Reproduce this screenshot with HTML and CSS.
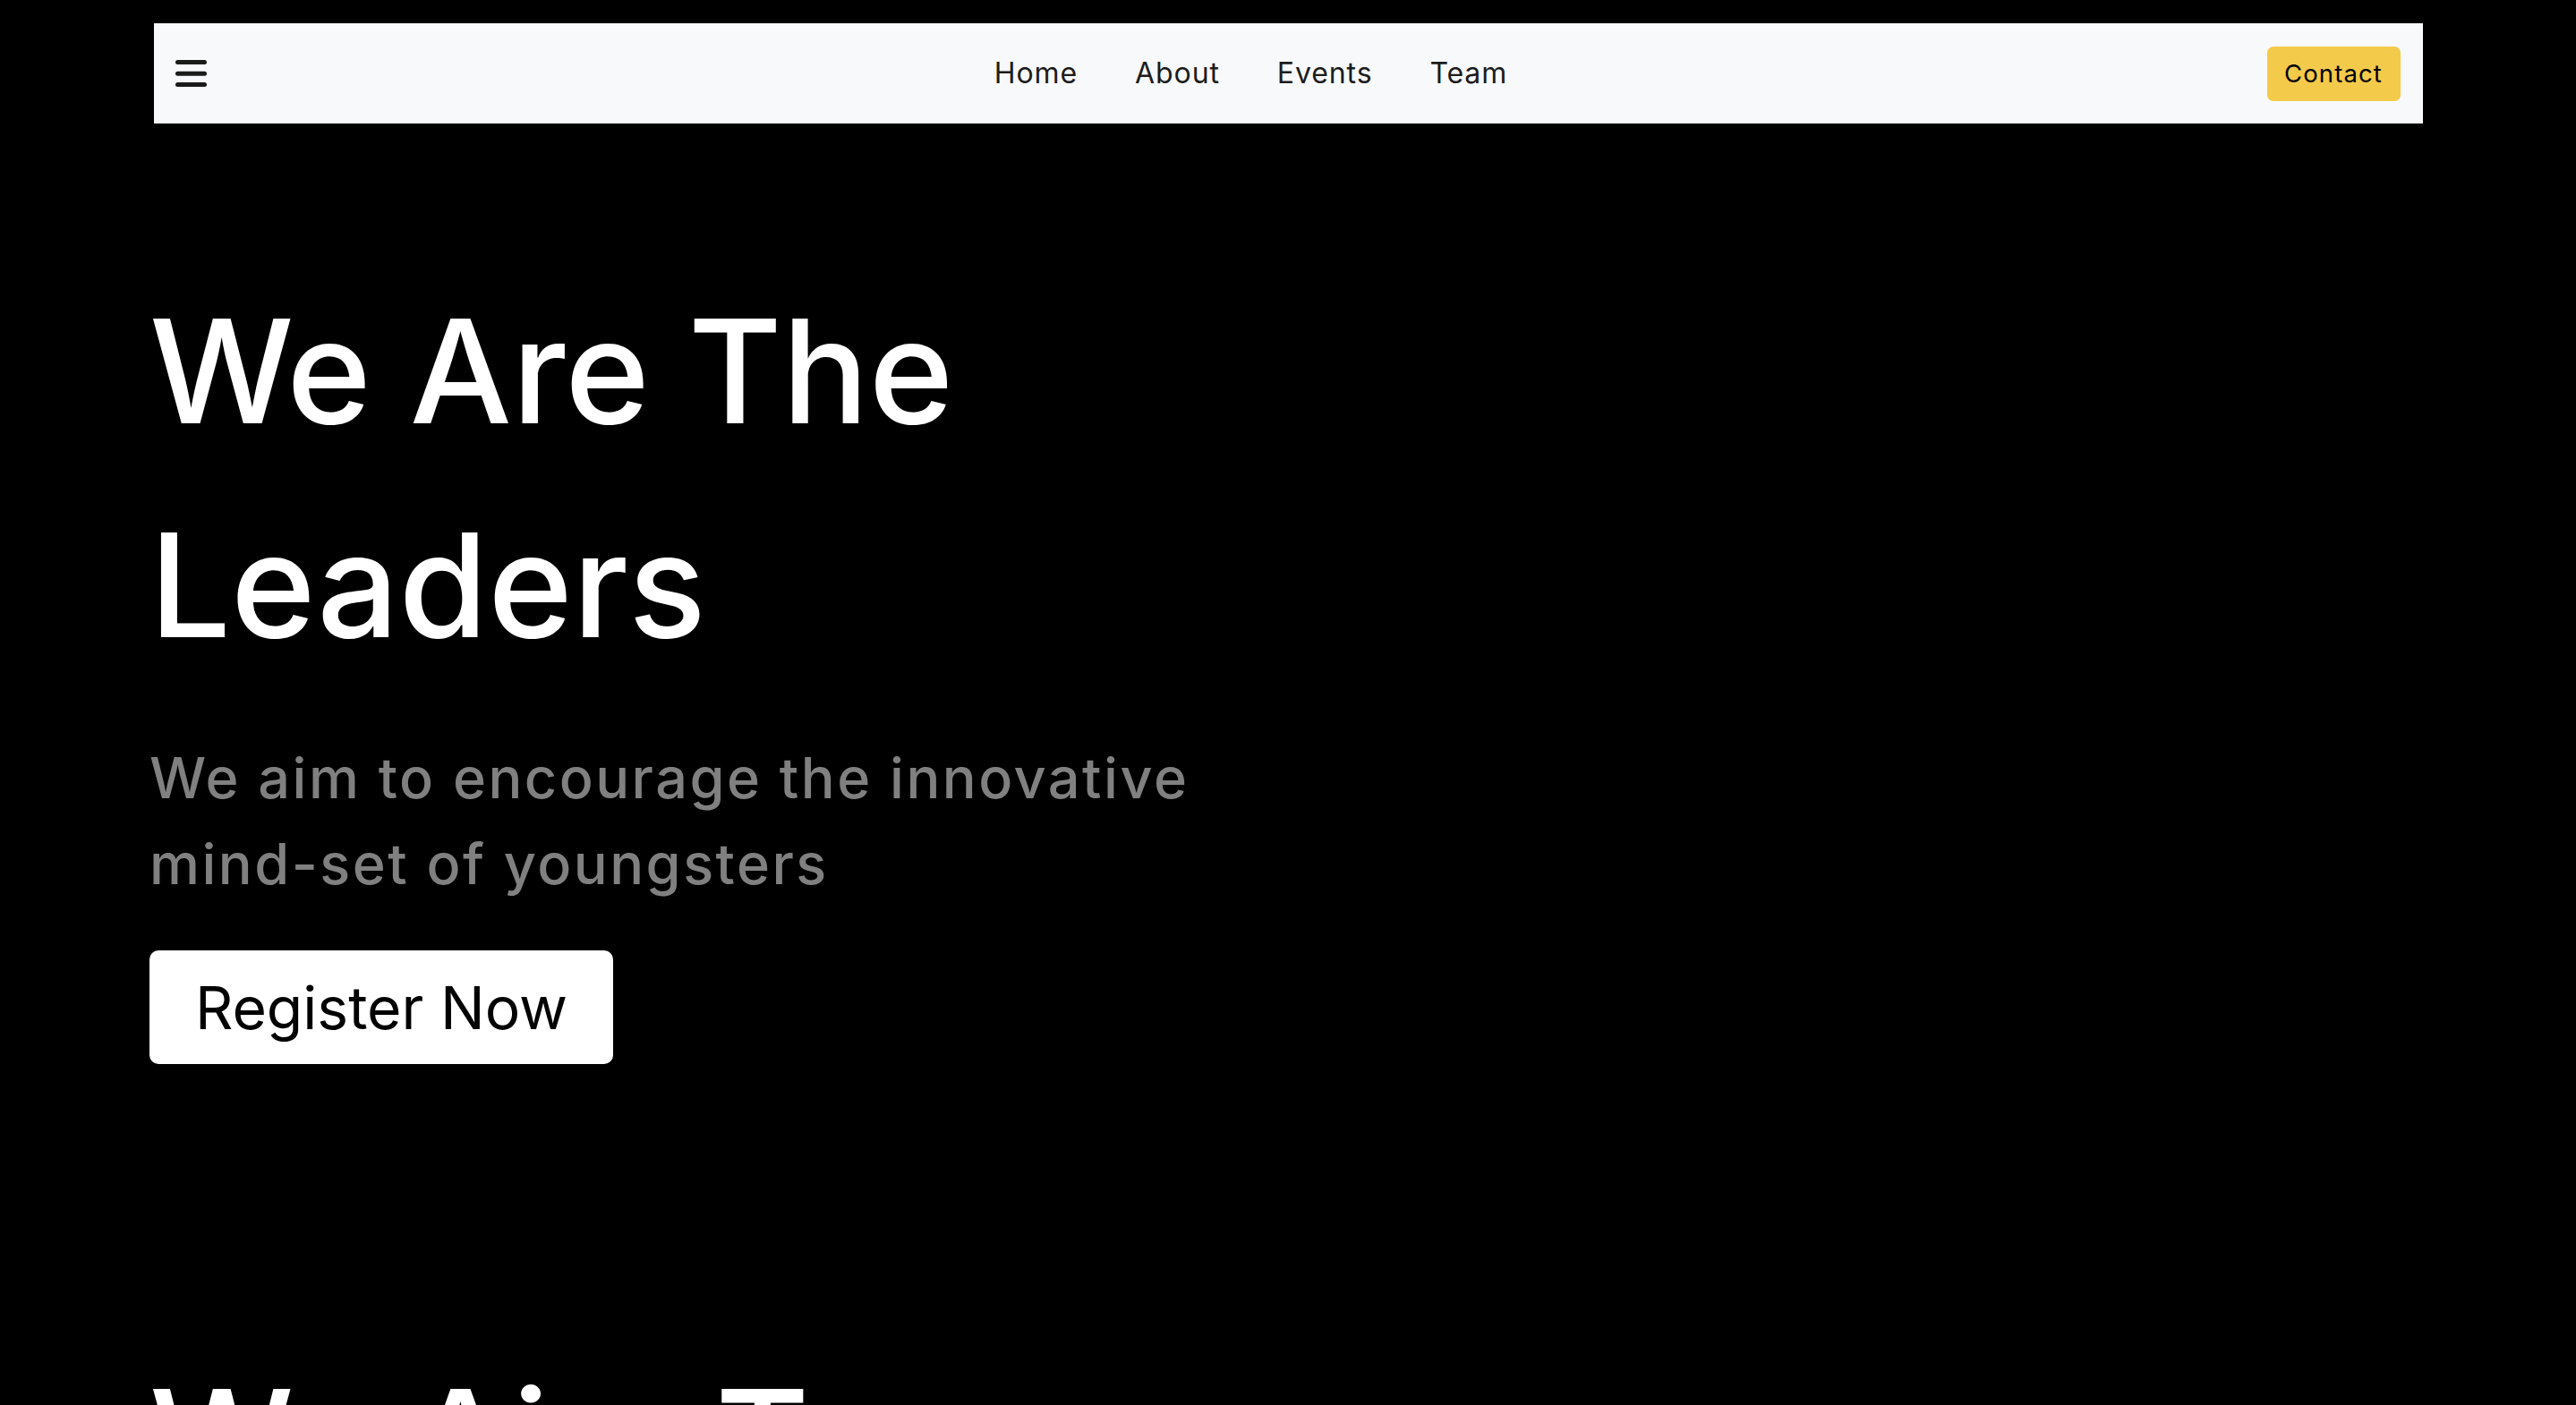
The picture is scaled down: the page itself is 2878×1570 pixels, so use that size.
FILE: index.html
```html
<!DOCTYPE html>
<html lang="en">
<head>
<meta charset="utf-8">
<title>We Are The Leaders</title>
<link rel="stylesheet" href="styles.css">
</head>
<body>
<header class="site-header">
  <nav class="navbar">
    <button class="toggler" aria-label="Menu">
      <svg width="35" height="30" viewBox="0 0 35 30"><g stroke="#1b1b1b" stroke-width="5" stroke-linecap="round"><line x1="2.5" y1="2.5" x2="32.5" y2="2.5"/><line x1="2.5" y1="15.2" x2="32.5" y2="15.2"/><line x1="2.5" y1="27.5" x2="32.5" y2="27.5"/></g></svg>
    </button>
    <ul class="nav-links">
      <li><a href="#">Home</a></li>
      <li><a href="#">About</a></li>
      <li><a href="#">Events</a></li>
      <li><a href="#">Team</a></li>
    </ul>
    <a class="contact-btn" href="#">Contact</a>
  </nav>
</header>
<main>
  <section class="hero">
    <h1 class="hero-title">We Are The<br>Leaders</h1>
    <p class="hero-sub">We aim to encourage the innovative mind-set of youngsters</p>
    <a class="register-btn" href="#">Register Now</a>
  </section>
  <section class="aim">
    <h2 class="hero-title">We Aim To</h2>
  </section>
</main>
</body>
</html>
```
FILE: styles.css
```css
* { box-sizing: border-box; }
html, body { margin: 0; padding: 0; }
body {
  background: #000;
  font-family: "Inter", "Open Sans", sans-serif;
  overflow: hidden;
  height: 1570px;
}
.site-header {
  padding-top: 26px;
}
.navbar {
  width: 2535px;
  margin: 0 auto;
  height: 112px;
  background: #f8f9fa;
  display: flex;
  align-items: center;
  padding: 0 25px 0 24px;
}
.toggler {
  background: none;
  border: 0;
  padding: 0;
  width: 35px;
  height: 30px;
  display: flex;
}
.nav-links {
  flex: 1;
  display: flex;
  justify-content: center;
  gap: 64px;
  list-style: none;
  margin: 0;
  padding: 0 0 0 32px;
}
.nav-links a {
  color: #1c1c1c;
  text-decoration: none;
  font-size: 32px;
  letter-spacing: 0.9px;
  line-height: 40px;
  display: block;
}
.contact-btn {
  width: 149px;
  height: 61px;
  background: #f4ca4b;
  border-radius: 7px;
  color: #000;
  text-decoration: none;
  font-size: 27.5px;
  letter-spacing: 1.1px;
  display: flex;
  align-items: center;
  justify-content: center;
}
.hero {
  padding: 157px 0 0 167px;
}
.hero-title {
  margin: 0;
  color: #fff;
  font-weight: 500;
  font-size: 161px;
  line-height: 239px;
}
.hero-sub {
  margin: 49px 0 49px;
  color: #808080;
  font-size: 63px;
  font-weight: 500;
  letter-spacing: 2.5px;
  line-height: 95.6px;
  max-width: 1260px;
}
.register-btn {
  display: flex;
  align-items: center;
  justify-content: center;
  width: 518px;
  height: 127px;
  background: #fff;
  color: #000;
  border-radius: 10px;
  text-decoration: none;
  font-size: 66px;
}
.aim {
  padding: 302px 0 0 167px;
}
```
